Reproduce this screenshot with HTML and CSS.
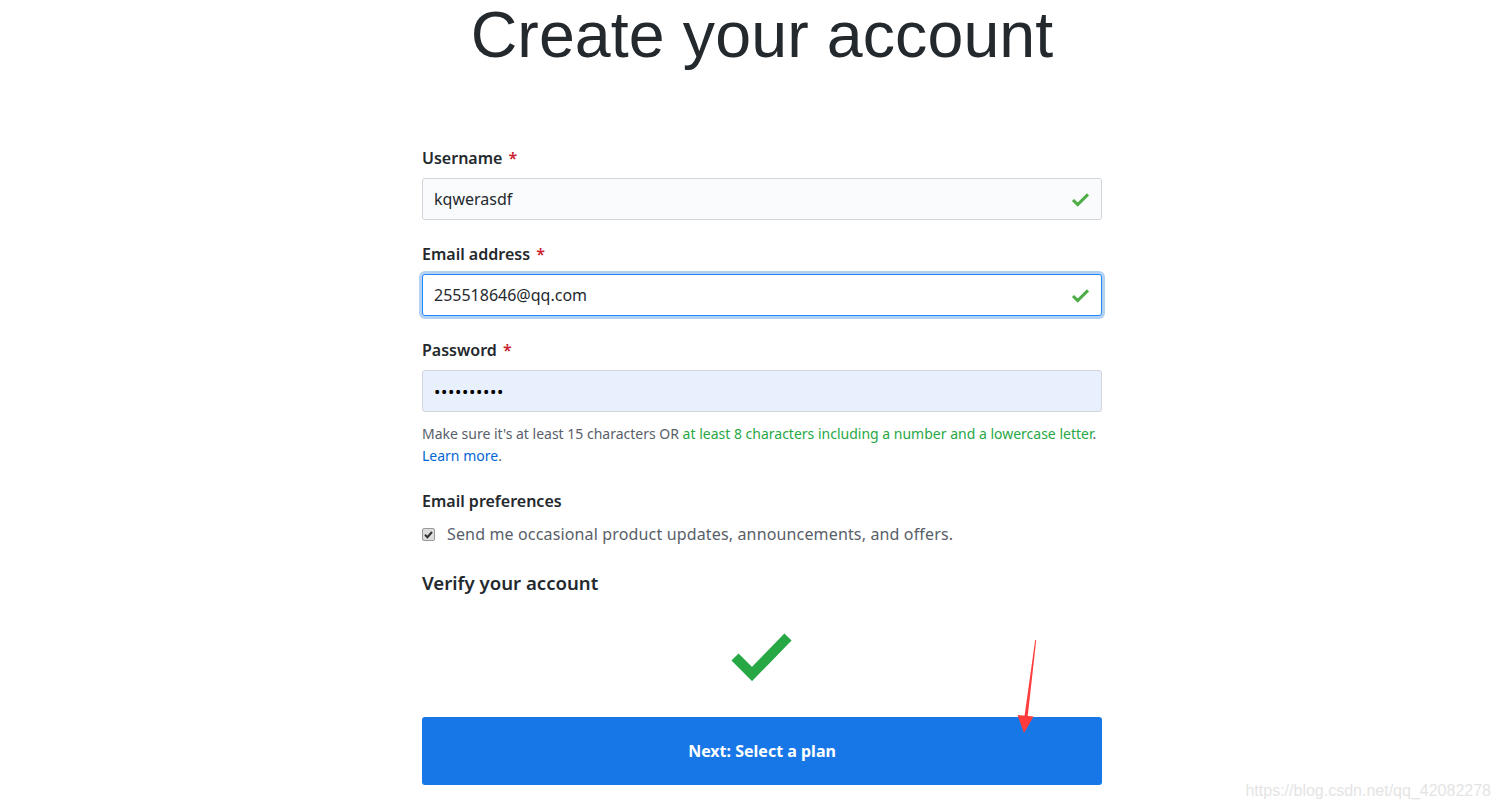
FILE: index.html
```html
<!DOCTYPE html>
<html>
<head>
<meta charset="utf-8">
<link rel="stylesheet" href="styles.css">
</head>
<body>
<main class="page">
  <h1 class="title">Create your account</h1>
  <form class="form">
    <div class="field">
      <label class="label">Username <span class="req">*</span></label>
      <div class="input ok">
        <span class="value">kqwerasdf</span>
        <svg class="tick" viewBox="0 0 20 16" width="19" height="15"><path d="M2 8.5l5 5L18 2.5" fill="none" stroke="#4fad47" stroke-width="3.2"/></svg>
      </div>
    </div>
    <div class="field">
      <label class="label">Email address <span class="req">*</span></label>
      <div class="input ok focus">
        <span class="value">255518646@qq.com</span>
        <svg class="tick" viewBox="0 0 20 16" width="19" height="15"><path d="M2 8.5l5 5L18 2.5" fill="none" stroke="#4fad47" stroke-width="3.2"/></svg>
      </div>
    </div>
    <div class="field">
      <label class="label">Password <span class="req">*</span></label>
      <div class="input autofill">
        <span class="dots">••••••••••</span>
      </div>
      <p class="note">Make sure it's at least 15 characters OR <span class="good">at least 8 characters including a number and a lowercase letter</span>.<br><a class="link">Learn more</a>.</p>
    </div>
    <div class="prefs">
      <div class="label">Email preferences</div>
      <div class="check-row">
        <span class="box"><svg viewBox="0 0 13 13" width="13" height="13"><path d="M3 6.8l2.4 2.4L10 4" fill="none" stroke="#333" stroke-width="2"/></svg></span>
        <span class="check-text">Send me occasional product updates, announcements, and offers.</span>
      </div>
    </div>
    <h2 class="verify">Verify your account</h2>
    <div class="captcha">
      <svg viewBox="0 0 62 50" width="62" height="50"><path d="M4 26l17 17L57 6" fill="none" stroke="#28a745" stroke-width="10"/></svg>
    </div>
    <button type="button" class="btn">Next: Select a plan</button>
  </form>
  <svg class="arrow" viewBox="0 0 30 100" width="30" height="100"><path d="M18.2 0L19.2 0.3L10.5 78L7.4 77Z" fill="#ff3b3b"/><path d="M0.5 75L16.5 76.5L7 93Z" fill="#ff3b3b"/></svg>
  <div class="watermark">https://blog.csdn.net/qq_42082278</div>
</main>
</body>
</html>
```
FILE: styles.css
```css
* { box-sizing: border-box; }
html, body { margin: 0; padding: 0; background: #fff; }
body { font-family: "Noto Sans", "Open Sans", sans-serif; color: #24292e; }
.page { position: relative; width: 1499px; height: 808px; overflow: hidden; padding-left: 25px; }
.title {
  margin: 0; padding-top: 0;
  font-family: "Liberation Sans", Arial, sans-serif;
  font-weight: 400; font-size: 64.5px; line-height: 70px;
  text-align: center; letter-spacing: 0.1px;
}
.form { width: 680px; margin: 76px auto 0; }
.field { margin-bottom: 22px; }
.label { display: block; font-size: 16px; font-weight: 600; line-height: 24px; margin-bottom: 8px; }
.req { color: #cb2431; margin-left: 2px; }
.input {
  height: 42px; border: 1px solid #d1d5da; border-radius: 3px; background: #fafbfc;
  display: flex; align-items: center; justify-content: space-between; padding: 0 11px 0 11px;
  font-size: 16px;
}
.input.focus { background: #fff; border-color: #2188ff; box-shadow: 0 0 0 3px rgba(3,102,214,.3); }
.input.autofill { background: #e8f0fe; }
.dots { font-size: 17px; letter-spacing: 0.6px; color: #000; }
.note { margin: 11px 0 0; font-size: 14px; line-height: 22px; color: #586069; }
.good { color: #28a745; }
.link { color: #0366d6; }
.prefs { margin-top: 19px; }
.check-row { display: flex; align-items: center; gap: 12px; margin-top: 9px; }
.box { width: 13px; height: 13px; border: 1px solid #999; border-radius: 2px; background: #ddd; display: flex; }
.box svg { margin: -1px; }
.check-text { font-size: 16px; color: #586069; line-height: 24px; letter-spacing: 0.15px; }
.verify { margin: 22px 0 0; font-size: 18.6px; font-weight: 600; line-height: 30px; }
.captcha { display: flex; justify-content: center; margin-top: 33px; height: 50px; }
.btn {
  display: block; width: 680px; height: 68px; margin-top: 36px; border: 0; border-radius: 3px;
  background: #1877e6; color: #fff; font-family: inherit; font-size: 16px; font-weight: 700;
}
.arrow { position: absolute; left: 1017px; top: 640px; }
.watermark { position: absolute; right: 8px; bottom: 8px; font-family: "Liberation Sans", Arial, sans-serif; font-size: 16px; color: #e4e4e4; }
```
